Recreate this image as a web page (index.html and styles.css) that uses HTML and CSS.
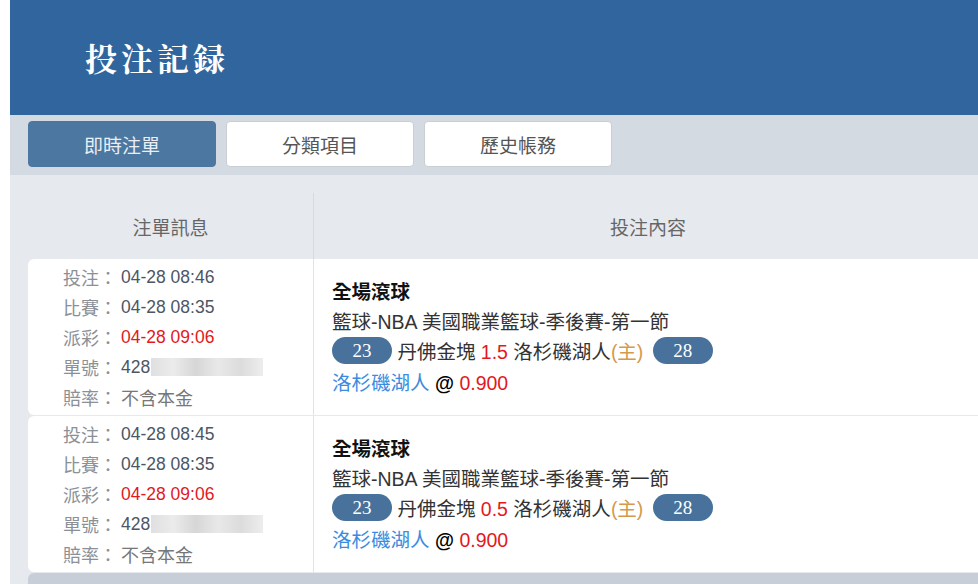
FILE: index.html
```html
<!DOCTYPE html>
<html lang="zh-Hant">
<head>
<meta charset="utf-8">
<title>投注記録</title>
<link rel="stylesheet" href="styles.css">
</head>
<body>
<div class="page">
  <header class="topbar">
    <h1 class="title">投注記録</h1>
  </header>
  <nav class="tabs">
    <a class="tab active">即時注單</a>
    <a class="tab">分類項目</a>
    <a class="tab">歷史帳務</a>
  </nav>
  <section class="board">
    <div class="thead">
      <div class="th th-info">注單訊息</div>
      <div class="th th-content">投注內容</div>
    </div>

    <div class="row">
      <div class="info">
        <div class="line"><span class="lbl">投注：</span><span class="val">04-28 08:46</span></div>
        <div class="line"><span class="lbl">比賽：</span><span class="val">04-28 08:35</span></div>
        <div class="line"><span class="lbl">派彩：</span><span class="val red">04-28 09:06</span></div>
        <div class="line"><span class="lbl">單號：</span><span class="val">428</span><span class="blur"></span></div>
        <div class="line"><span class="lbl">賠率：</span><span class="val soft">不含本金</span></div>
      </div>
      <div class="content">
        <div class="cline bold">全場滾球</div>
        <div class="cline">籃球-NBA 美國職業籃球-季後賽-第一節</div>
        <div class="cline pills"><span class="pill">23</span> 丹佛金塊 <span class="red">1.5</span> 洛杉磯湖人<span class="home">(主)</span> <span class="pill pill-right">28</span></div>
        <div class="cline"><span class="link">洛杉磯湖人</span> <span class="at">@</span> <span class="red">0.900</span></div>
      </div>
    </div>

    <div class="row">
      <div class="info">
        <div class="line"><span class="lbl">投注：</span><span class="val">04-28 08:45</span></div>
        <div class="line"><span class="lbl">比賽：</span><span class="val">04-28 08:35</span></div>
        <div class="line"><span class="lbl">派彩：</span><span class="val red">04-28 09:06</span></div>
        <div class="line"><span class="lbl">單號：</span><span class="val">428</span><span class="blur"></span></div>
        <div class="line"><span class="lbl">賠率：</span><span class="val soft">不含本金</span></div>
      </div>
      <div class="content">
        <div class="cline bold">全場滾球</div>
        <div class="cline">籃球-NBA 美國職業籃球-季後賽-第一節</div>
        <div class="cline pills"><span class="pill">23</span> 丹佛金塊 <span class="red">0.5</span> 洛杉磯湖人<span class="home">(主)</span> <span class="pill pill-right">28</span></div>
        <div class="cline"><span class="link">洛杉磯湖人</span> <span class="at">@</span> <span class="red">0.900</span></div>
      </div>
    </div>

    <div class="footbar"></div>
  </section>
</div>
</body>
</html>
```

FILE: styles.css
```css
* { box-sizing: border-box; }

html, body {
  margin: 0;
  padding: 0;
  background: #ffffff;
  overflow: hidden;
}

body {
  font-family: "Liberation Sans", "Noto Sans CJK TC", sans-serif;
  color: #333;
}

.page {
  margin-left: 10px;
  width: 968px;
}

.topbar {
  height: 115px;
  background: #31659d;
  display: flex;
  align-items: center;
  padding-left: 75px;
}

.title {
  margin: 0;
  color: #ffffff;
  font-family: "Noto Serif CJK TC", "Noto Sans CJK TC", serif;
  font-weight: 700;
  font-size: 32px;
  letter-spacing: 4px;
  line-height: 1;
  padding-bottom: 2px;
}

.tabs {
  height: 60px;
  background: #d3dae2;
  display: flex;
  gap: 10px;
  padding: 6px 0 0 18px;
}

.tab {
  width: 188px;
  height: 46px;
  border-radius: 4px;
  background: #ffffff;
  border: 1px solid #c9ced5;
  display: flex;
  align-items: center;
  justify-content: center;
  font-family: "Noto Sans CJK TC", sans-serif;
  font-size: 19px;
  color: #555;
}

.tab.active {
  background: #4b77a0;
  border-color: #4b77a0;
  color: #e9eff5;
}

.board {
  background: #e6e9ee;
  padding: 18px 0 0 18px;
  height: 420px;
  display: flex;
  flex-direction: column;
  gap: 1px;
}

.thead {
  display: flex;
  height: 66px;
  margin-bottom: -1px;
}

.th {
  display: flex;
  align-items: center;
  justify-content: center;
  font-family: "Noto Sans CJK TC", sans-serif;
  font-size: 19px;
  color: #666;
}

.th-info {
  width: 286px;
  border-right: 1px solid #d6dbe1;
}

.th-content {
  flex: 1;
  padding-left: 4px;
}

.row {
  display: flex;
  height: 156px;
}

.info {
  width: 286px;
  background: #ffffff;
  border-right: 1px solid #dfe3e8;
  border-radius: 6px 0 0 6px;
  padding: 3px 0 0 35px;
  font-size: 17.5px;
}

.line {
  height: 30px;
  line-height: 30px;
  display: flex;
  align-items: center;
  white-space: nowrap;
}

.lbl {
  font-family: "Noto Sans CJK TC", sans-serif;
  color: #8b9097;
  width: 54px;
  font-size: 18px;
}

.val {
  margin-left: 4px;
  color: #4c5664;
  font-family: "Liberation Sans", "Noto Sans CJK TC", sans-serif;
}

.val.soft {
  color: #777;
  font-family: "Noto Sans CJK TC", sans-serif;
  font-size: 18px;
}

.blur {
  display: inline-block;
  width: 112px;
  height: 18px;
  margin-left: 1px;
  background: linear-gradient(90deg, #dcdcdc 0%, #e9e9e9 20%, #d2d2d2 40%, #e6e6e6 60%, #d8d8d8 80%, #ebebeb 100%);
  opacity: 0.9;
}

.red { color: #e3191d; }

.content {
  flex: 1;
  background: #ffffff;
  display: flex;
  flex-direction: column;
  justify-content: center;
  padding-left: 18px;
  font-size: 19.5px;
  color: #333;
}

.cline {
  line-height: 30px;
  white-space: nowrap;
}

.cline.bold {
  font-weight: 700;
  color: #111;
}

.cline.pills {
  line-height: 31px;
  height: 31px;
}

.pill {
  display: inline-block;
  vertical-align: middle;
  width: 60px;
  height: 27px;
  line-height: 27px;
  border-radius: 14px;
  background: #48729b;
  color: #ffffff;
  text-align: center;
  font-family: "Liberation Serif", serif;
  font-size: 19px;
  margin-top: -6px;
}

.pill-right {
  margin-left: 4px;
}

.home { color: #d49a4c; }

.link { color: #3b8be0; }

.at {
  color: #000;
  font-weight: 700;
}

.footbar {
  flex: 1;
  background: #c7ced7;
  border-radius: 6px 0 0 0;
}
```
